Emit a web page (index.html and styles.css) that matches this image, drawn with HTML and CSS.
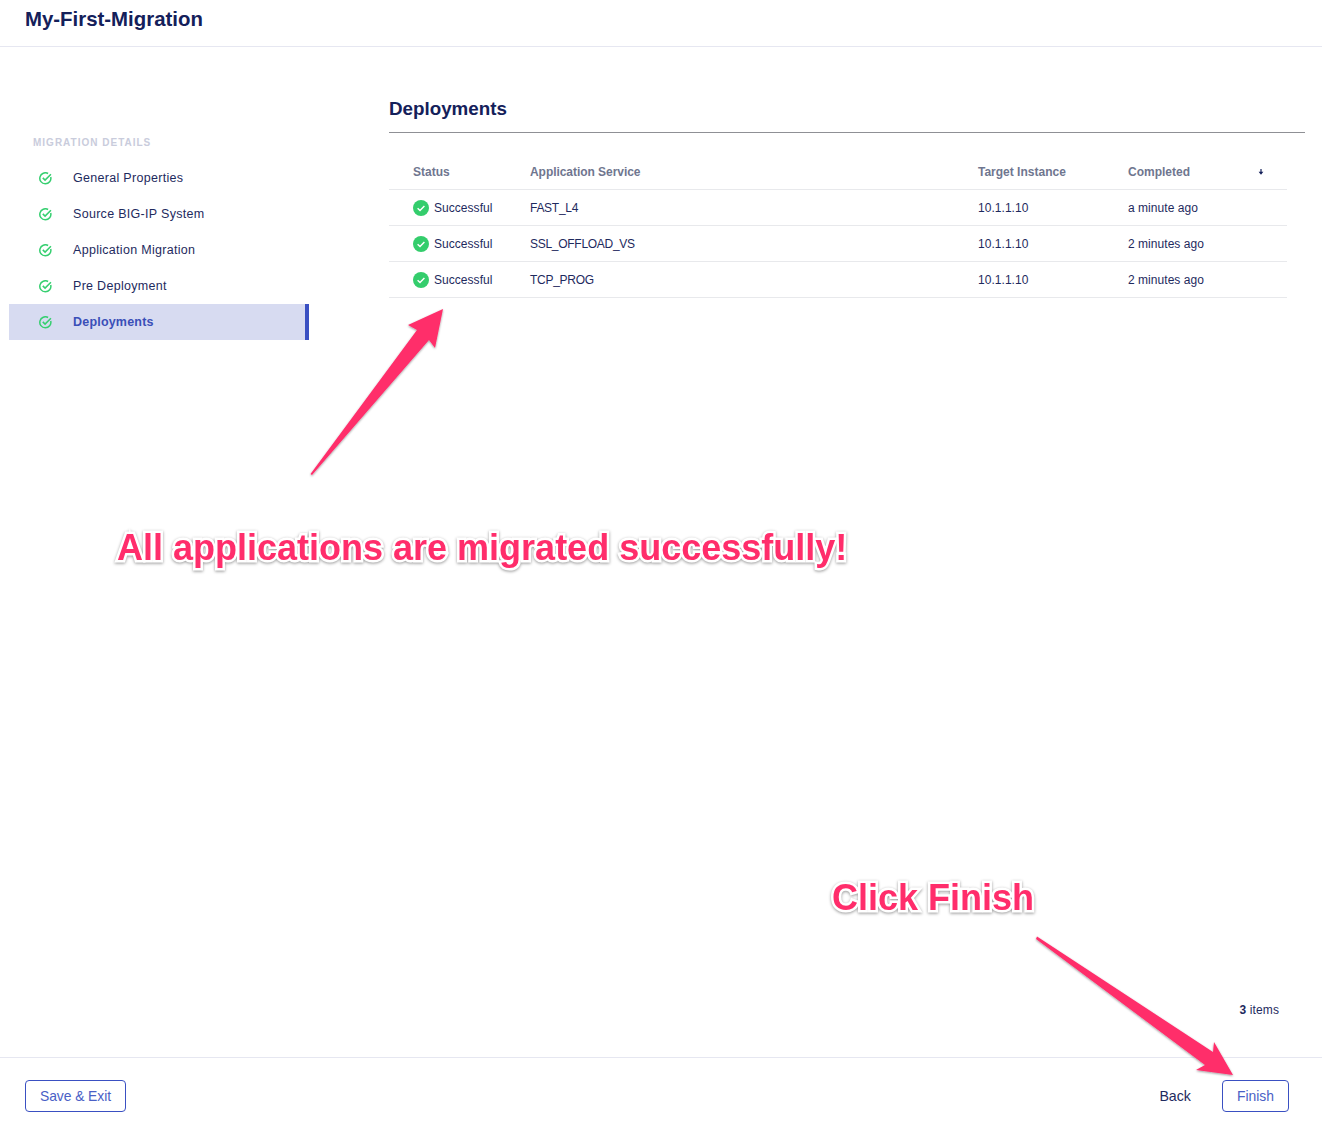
FILE: index.html
```html
<!DOCTYPE html>
<html lang="en">
<head>
<meta charset="utf-8">
<title>My-First-Migration</title>
<link rel="stylesheet" href="styles.css">
</head>
<body>
<div class="page">
  <header class="topbar"><h1 class="app-title">My-First-Migration</h1></header>
  <div class="content">
    <nav class="sidebar">
      <div class="side-label">MIGRATION DETAILS</div>
      <a class="side-item"><svg class="side-icon" viewBox="0 0 12 12"><path d="M10.8 4.6A5.1 5.1 0 1 1 8.4 1.4" /><path d="M3.5 5.4 5.6 7.5 11 2" /></svg><span>General Properties</span></a>
      <a class="side-item"><svg class="side-icon" viewBox="0 0 12 12"><path d="M10.8 4.6A5.1 5.1 0 1 1 8.4 1.4" /><path d="M3.5 5.4 5.6 7.5 11 2" /></svg><span>Source BIG-IP System</span></a>
      <a class="side-item"><svg class="side-icon" viewBox="0 0 12 12"><path d="M10.8 4.6A5.1 5.1 0 1 1 8.4 1.4" /><path d="M3.5 5.4 5.6 7.5 11 2" /></svg><span>Application Migration</span></a>
      <a class="side-item"><svg class="side-icon" viewBox="0 0 12 12"><path d="M10.8 4.6A5.1 5.1 0 1 1 8.4 1.4" /><path d="M3.5 5.4 5.6 7.5 11 2" /></svg><span>Pre Deployment</span></a>
      <a class="side-item active"><svg class="side-icon" viewBox="0 0 12 12"><path d="M10.8 4.6A5.1 5.1 0 1 1 8.4 1.4" /><path d="M3.5 5.4 5.6 7.5 11 2" /></svg><span>Deployments</span></a>
    </nav>
    <main class="main">
      <h2 class="section-title">Deployments</h2>
      <div class="table-wrap">
        <table class="grid">
          <thead>
            <tr>
              <th class="col-status">Status</th>
              <th class="col-app">Application Service</th>
              <th class="col-target">Target Instance</th>
              <th class="col-completed">Completed</th>
              <th class="col-sort"><svg class="sort-icon" viewBox="0 0 6 6"><path d="M3 0V3.4" /><path class="fill" d="M.6 2.8H5.4L3 5.8Z" /></svg></th>
            </tr>
          </thead>
          <tbody>
            <tr>
              <td><div class="status"><svg class="ok" viewBox="0 0 16 16"><circle cx="8" cy="8" r="8" /><path d="M4.6 8.3 7 10.6 11.4 5.9" /></svg>Successful</div></td>
              <td class="svc">FAST_L4</td><td>10.1.1.10</td><td>a minute ago</td><td></td>
            </tr>
            <tr>
              <td><div class="status"><svg class="ok" viewBox="0 0 16 16"><circle cx="8" cy="8" r="8" /><path d="M4.6 8.3 7 10.6 11.4 5.9" /></svg>Successful</div></td>
              <td class="svc">SSL_OFFLOAD_VS</td><td>10.1.1.10</td><td>2 minutes ago</td><td></td>
            </tr>
            <tr>
              <td><div class="status"><svg class="ok" viewBox="0 0 16 16"><circle cx="8" cy="8" r="8" /><path d="M4.6 8.3 7 10.6 11.4 5.9" /></svg>Successful</div></td>
              <td class="svc">TCP_PROG</td><td>10.1.1.10</td><td>2 minutes ago</td><td></td>
            </tr>
          </tbody>
        </table>
        <div class="count"><b>3</b> items</div>
      </div>
    </main>
  </div>
  <footer class="footer">
    <button class="btn btn-save">Save &amp; Exit</button>
    <div class="footer-right">
      <button class="link-btn">Back</button>
      <button class="btn">Finish</button>
    </div>
  </footer>
</div>
<svg class="overlay" viewBox="0 0 1322 1125" width="1322" height="1125">
  <defs><filter id="sh" x="-10%" y="-10%" width="120%" height="120%"><feDropShadow dx="0" dy="1" stdDeviation="1" flood-color="#000" flood-opacity=".4"/></filter></defs>
  <path class="arrow" filter="url(#sh)" d="M310.5 474 417 330 408 325 443 309 435 348 429 340 312 475Z"/>
  <path class="arrow" filter="url(#sh)" d="M1037 936.5 1213 1052 1214 1042 1233 1075 1196 1070 1205 1065 1036 939Z"/>
</svg>
<div class="note note-a">All applications are migrated successfully!</div>
<div class="note note-b">Click Finish</div>
</body>
</html>
```
FILE: styles.css
```css
* { box-sizing: border-box; }
html, body { margin: 0; padding: 0; background: #fff; }
body { font-family: "Liberation Sans", Arial, sans-serif; color: #14205a; position: relative; width: 1322px; height: 1125px; overflow: hidden; }
.page { display: flex; flex-direction: column; height: 1125px; }
.topbar { height: 47px; border-bottom: 1px solid #e6e7f1; padding: 7px 25px 0; flex: none; }
.app-title { margin: 0; font-size: 20.4px; line-height: 24px; font-weight: 700; color: #14205a; }
.content { flex: 1; display: flex; min-height: 0; }
.sidebar { width: 300px; margin-left: 9px; padding-top: 89px; flex: none; }
.side-label { font-size: 10px; line-height: 14px; font-weight: 700; letter-spacing: 1px; color: #c9ccdc; padding-left: 24px; margin-bottom: 10px; }
.side-item { display: flex; align-items: center; height: 36px; padding-left: 30px; font-size: 12.5px; letter-spacing: .3px; color: #1e2a5e; }
.side-icon { width: 13px; height: 13px; margin-right: 21px; fill: none; stroke: #36cf70; stroke-width: 1.4; flex: none; }
.side-item.active { background: #d7dbf1; border-right: 4px solid #3a50c2; color: #3a4fb8; font-weight: 700; letter-spacing: .2px; }
.main { width: 916px; margin-left: 80px; display: flex; flex-direction: column; }
.section-title { margin: 0; height: 86px; padding-top: 51px; font-size: 18.8px; line-height: 22px; font-weight: 700; color: #14205a; border-bottom: 1px solid #8f9095; flex: none; }
.table-wrap { flex: 1; width: 898px; padding-top: 21px; display: flex; flex-direction: column; justify-content: space-between; padding-bottom: 40px; }
.grid { width: 898px; border-collapse: collapse; table-layout: fixed; font-size: 12px; letter-spacing: .04px; color: #1e2a5e; }
.grid th { height: 35px; text-align: left; font-weight: 700; color: #6f768f; border-bottom: 1px solid #e8e9ec; padding: 1px 0 0; letter-spacing: 0; }
.grid td { height: 36px; border-bottom: 1px solid #e8e9ec; padding: 1px 0 0; }
.grid td.svc { letter-spacing: -.28px; }
.grid th.col-app { letter-spacing: -.05px; }
.grid td:first-child, .col-status { padding-left: 24px !important; }
.col-status { width: 141px; }
.col-app { width: 448px; }
.col-target { width: 150px; }
.col-completed { width: 130px; }
.col-sort { width: 29px; }
.status { display: flex; align-items: center; gap: 5px; }
.ok { width: 16px; height: 16px; flex: none; }
.ok circle { fill: #34cd6c; }
.ok path { fill: none; stroke: #fff; stroke-width: 1.4; }
.sort-icon { display: block; width: 6px; height: 6px; fill: none; stroke: #14205a; stroke-width: 1.2; }
.sort-icon .fill { fill: #14205a; stroke: none; }
.count { align-self: flex-end; font-size: 12px; line-height: 14px; letter-spacing: .1px; color: #1e2a5e; padding-right: 8px; }
.footer { height: 68px; border-top: 1px solid #e6e7f1; padding: 22px 33px 0 25px; display: flex; justify-content: space-between; align-items: flex-start; flex: none; }
.footer-right { display: flex; align-items: center; gap: 31px; }
.btn { height: 32px; padding: 0 14px; background: #fff; border: 1px solid #3a50c2; border-radius: 4px; color: #4a5fc6; font: 13.9px "Liberation Sans", Arial, sans-serif; }
.btn-save { width: 101px; padding: 0; letter-spacing: -.08px; }
.link-btn { padding: 0; background: none; border: 0; color: #1e2a5e; font: 14.2px "Liberation Sans", Arial, sans-serif; }
.overlay { position: absolute; left: 0; top: 0; pointer-events: none; }
.arrow { fill: #ff2d6b; }
.note { position: absolute; font-size: 36px; line-height: 42px; font-weight: 700; color: #ff2d6b; white-space: nowrap; paint-order: stroke fill; -webkit-text-stroke: 5px #fff; filter: drop-shadow(0 1px 1.5px rgba(0,0,0,.4)); }
.note-a { left: 117px; top: 527px; }
.note-b { left: 832px; top: 877px; }
```
